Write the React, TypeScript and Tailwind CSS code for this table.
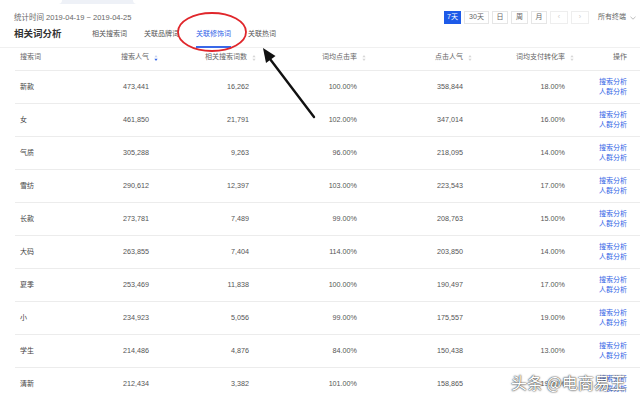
import React from 'react';

type Row = {
    word: string;
    pop: string;
    related: string;
    ctr: string;
    clicks: string;
    conv: string;
};

const rows: Row[] = [
    { word: '新款', pop: '473,441', related: '16,262', ctr: '100.00%', clicks: '358,844', conv: '18.00%' },
    { word: '女', pop: '461,850', related: '21,791', ctr: '102.00%', clicks: '347,014', conv: '16.00%' },
    { word: '气质', pop: '305,288', related: '9,263', ctr: '96.00%', clicks: '218,095', conv: '14.00%' },
    { word: '雪纺', pop: '290,612', related: '12,397', ctr: '103.00%', clicks: '223,543', conv: '17.00%' },
    { word: '长款', pop: '273,781', related: '7,489', ctr: '99.00%', clicks: '208,763', conv: '15.00%' },
    { word: '大码', pop: '263,855', related: '7,404', ctr: '114.00%', clicks: '203,850', conv: '14.00%' },
    { word: '夏季', pop: '253,469', related: '11,838', ctr: '100.00%', clicks: '190,497', conv: '17.00%' },
    { word: '小', pop: '234,923', related: '5,056', ctr: '99.00%', clicks: '175,557', conv: '19.00%' },
    { word: '学生', pop: '214,486', related: '4,876', ctr: '84.00%', clicks: '150,438', conv: '13.00%' },
    { word: '清新', pop: '212,434', related: '3,382', ctr: '101.00%', clicks: '158,865', conv: '19.00%' },
];

const tabs = ['相关搜索词', '关联品牌词', '关联修饰词', '关联热词'];

const SortIcon: React.FC<{ active?: boolean }> = ({ active }) => (
    <svg width="4" height="7" viewBox="0 0 4 7" className="absolute left-full top-1/2 -translate-y-1/2 ml-[5px]">
        <path d="M2 0.5 L3.6 2.8 L0.4 2.8 Z" fill={active ? '#c9d3ee' : '#d6d6d6'} />
        <path d="M2 6.5 L3.6 4.2 L0.4 4.2 Z" fill={active ? '#2f62e8' : '#d6d6d6'} />
    </svg>
);

const Head: React.FC<{ label: string; sort?: boolean; active?: boolean; right?: boolean }> = ({ label, sort, active, right }) => (
    <div className={right ? 'flex justify-end' : 'flex'}>
        <span className="relative">
            {label}
            {sort && <SortIcon active={active} />}
        </span>
    </div>
);

const cols = 'grid grid-cols-[106px_58px_70px_108px_106px_102px_62px] items-center';

const App: React.FC = () => {
    return (
        <div className="relative w-[640px] h-[394px] overflow-hidden bg-white font-['Liberation_Sans','Noto_Sans_CJK_SC',sans-serif] text-[7px] text-[#555]">
            {/* top strip */}
            <div className="flex h-[4px] bg-[#eef1f7]">
                <div className="w-[62px] bg-white rounded-br-[4px]" />
                <div className="w-[71px]" />
                <div className="flex-1 bg-white rounded-bl-[4px]" />
            </div>

            {/* period row */}
            <div className="flex items-center justify-between h-[22px] pl-[14px] pr-[4px] pt-[5px]">
                <span className="text-[7.5px] text-[#666]">统计时间 2019-04-19 ~ 2019-04-25</span>
                <div className="flex items-center gap-[3px]">
                    <span className="flex items-center justify-center w-[17px] h-[13px] bg-[#1d5ae8] text-white">7天</span>
                    <span className="flex items-center justify-center w-[25px] h-[13px] border border-[#e6e6e6] text-[#666]">30天</span>
                    <span className="flex items-center justify-center w-[16px] h-[13px] border border-[#e6e6e6] text-[#666]">日</span>
                    <span className="flex items-center justify-center w-[17px] h-[13px] border border-[#e6e6e6] text-[#666]">周</span>
                    <span className="flex items-center justify-center w-[16px] h-[13px] border border-[#e6e6e6] text-[#666]">月</span>
                    <span className="flex items-center justify-center w-[18px] h-[13px] border border-[#eee] text-[#ccc]">&lsaquo;</span>
                    <span className="flex items-center justify-center w-[18px] h-[13px] border border-[#eee] text-[#ccc]">&rsaquo;</span>
                    <span className="ml-[6px] flex items-center gap-[4px] text-[#666]">
                        所有终端
                        <svg width="6" height="4" viewBox="0 0 6 4">
                            <path d="M0.5 0.8 L3 3.2 L5.5 0.8" fill="none" stroke="#aaa" strokeWidth="0.8" />
                        </svg>
                    </span>
                </div>
            </div>

            {/* title + tabs */}
            <div className="flex items-stretch h-[22px] pl-[14px] border-b border-[#f0f0f0]">
                <span className="flex items-center w-[78px] pb-[4px] text-[9.5px] font-bold text-[#333]">相关词分析</span>
                <div className="flex gap-[17px]">
                    {tabs.map(t => (
                        <span
                            key={t}
                            className={
                                t === '关联修饰词'
                                    ? 'flex items-center pb-[3px] -mb-px border-b-2 border-[#3a68e8] text-[#2f62e8]'
                                    : 'flex items-center pb-[3px] -mb-px border-b-2 border-transparent text-[#555]'
                            }
                        >
                            {t}
                        </span>
                    ))}
                </div>
            </div>

            {/* table */}
            <div className="ml-[15px]">
                <div className={`${cols} h-[23px] pb-[3px] border-b border-[#ececec] text-[#666]`}>
                    <span className="pl-[5px]">搜索词</span>
                    <Head label="搜索人气" sort active />
                    <div className="pr-[2px]">
                        <Head label="相关搜索词数" sort right />
                    </div>
                    <Head label="词均点击率" sort right />
                    <Head label="点击人气" sort right />
                    <Head label="词均支付转化率" sort right />
                    <Head label="操作" right />
                </div>
                {rows.map(r => (
                    <div key={r.word} className={`${cols} h-[33px] border-b border-[#ececec]`}>
                        <span className="pl-[5px] text-[#444]">{r.word}</span>
                        <span className="pl-[2px] text-[7.2px]">{r.pop}</span>
                        <span className="text-right text-[7.2px]">{r.related}</span>
                        <span className="text-right text-[7.2px]">{r.ctr}</span>
                        <span className="text-right text-[7.2px]">{r.clicks}</span>
                        <span className="text-right text-[7.2px]">{r.conv}</span>
                        <div className="flex flex-col items-end leading-[10px] text-[#3566e6]">
                            <span>搜索分析</span>
                            <span>人群分析</span>
                        </div>
                    </div>
                ))}
            </div>

            {/* annotation */}
            <svg className="absolute inset-0 pointer-events-none" width="640" height="394" viewBox="0 0 640 394">
                <ellipse cx="212" cy="32" rx="34" ry="19" fill="none" stroke="#e0262b" strokeWidth="1.8" />
                <line x1="314" y1="117" x2="270" y2="59" stroke="#111" strokeWidth="2.4" strokeLinecap="round" />
                <polygon points="263,48 275.5,56 266,63" fill="#111" />
            </svg>

            {/* watermark */}
            <span className="absolute left-[511px] top-[372px] text-[16px] leading-[20px] text-white font-['Noto_Sans_CJK_SC',sans-serif] [text-shadow:0_0_2px_#333,0_0_1px_#333]">
                头条 @电商易王
            </span>
        </div>
    );
};

export default App;
